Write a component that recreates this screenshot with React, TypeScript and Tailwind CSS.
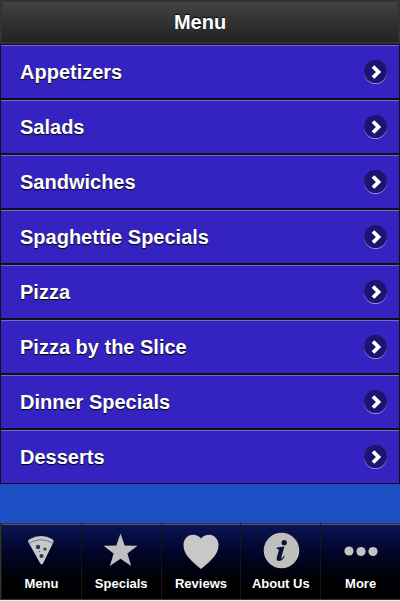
import React from "react";

const items = [
  "Appetizers",
  "Salads",
  "Sandwiches",
  "Spaghettie Specials",
  "Pizza",
  "Pizza by the Slice",
  "Dinner Specials",
  "Desserts",
];

function Chevron() {
  return (
    <span className="h-[23px] w-[23px] shrink-0 rounded-full bg-[#1c1470] shadow-[0_1px_0_#8f87dc]">
      <svg width="23" height="23" viewBox="0 0 23 23" aria-hidden="true">
        <path d="M9 6.5 L14.500 12 L9 17.500" fill="none" stroke="#fff" strokeWidth="3.800" />
      </svg>
    </span>
  );
}

function PizzaIcon() {
  return (
    <svg width="40" height="40" viewBox="0 0 40 40" aria-hidden="true">
      <path d="M7 11.500 Q7 10 8.500 9.200 Q20 3 31.500 9.200 Q33 10.200 32.500 12 L22 33.500 Q20.500 35.500 19 33 Z" fill="#c8c8c8" />
      <path d="M8.500 13 Q20 6.500 31.500 13" fill="none" stroke="#70748f" strokeWidth="1" />
      <circle cx="17" cy="17" r="2.200" fill="#30355f" />
      <circle cx="24" cy="19" r="1.600" fill="#30355f" />
      <circle cx="20.500" cy="26" r="2" fill="#30355f" />
      <circle cx="18.500" cy="21.500" r="0.800" fill="#565a7c" />
    </svg>
  );
}

function StarIcon() {
  return (
    <svg width="40" height="40" viewBox="0 0 40 40" aria-hidden="true">
      <path d="M19.500 3.500 L23.700 15.500 L36.500 15.700 L26.400 23.500 L30.200 36 L19.500 28.700 L8.900 36 L12.600 23.500 L2.500 15.700 L15.300 15.500 Z" fill="#bfbfbf" />
    </svg>
  );
}

function HeartIcon() {
  return (
    <svg width="40" height="40" viewBox="0 0 40 40" aria-hidden="true">
      <path d="M20 8.500 C22 5.800 25 4.700 28 4.700 C33.500 4.700 37.500 9 37.500 15 C37.500 24 31 30 20 39 C9 30 2.500 24 2.500 15 C2.500 9 6.500 4.700 12 4.700 C15 4.700 18 5.800 20 8.500 Z" fill="#c8c8c8" />
    </svg>
  );
}

function InfoIcon() {
  return (
    <svg width="40" height="40" viewBox="0 0 40 40" aria-hidden="true">
      <circle cx="20.500" cy="20.500" r="17.800" fill="#bfbfbf" />
      <circle cx="23.200" cy="12.700" r="2.600" fill="#0b1136" />
      <path d="M15.800 17.600 L23.400 16.500 L20.300 27.400 Q20 28.900 20.900 28.200 Q21.900 27.300 22.800 25.700 L23.700 26.400 Q20.900 31.100 17.500 30.900 Q15 30.400 15.800 27.400 L17.900 20 Q18.100 18.800 15.800 18.900 Z" fill="#0b1136" />
    </svg>
  );
}

function MoreIcon() {
  return (
    <svg width="40" height="40" viewBox="0 0 40 40" aria-hidden="true">
      <circle cx="8" cy="21" r="4.600" fill="#c4c4c4" />
      <circle cx="20" cy="21.500" r="4.600" fill="#c4c4c4" />
      <circle cx="32" cy="21.500" r="4.600" fill="#c4c4c4" />
    </svg>
  );
}

const tabs = [
  { label: "Menu", Icon: PizzaIcon },
  { label: "Specials", Icon: StarIcon },
  { label: "Reviews", Icon: HeartIcon },
  { label: "About Us", Icon: InfoIcon },
  { label: "More", Icon: MoreIcon },
];

export default function App() {
  return (
    <div className="flex min-h-screen flex-col bg-[#1c4fc4] font-['Liberation_Sans',Arial,sans-serif] font-bold text-white">
      <header className="flex h-11 items-center justify-center border-2 border-[#333] bg-linear-to-b from-[#434343] to-[#222]">
        <h1 className="text-xl leading-6 [text-shadow:0_-1px_1px_#000]">Menu</h1>
      </header>
      <main className="grow">
        <ul>
          {items.map((name) => (
            <li key={name}>
              <a
                href="#"
                className="flex h-[55px] items-center justify-between border border-[#111] bg-[#3422c1] pr-3 pl-[19px] text-xl leading-6 inset-shadow-[0_1px_0_#7067d3] [text-shadow:0_1px_1px_#000]"
              >
                <span>{name}</span>
                <Chevron />
              </a>
            </li>
          ))}
        </ul>
      </main>
      <footer className="border-b border-[#f3ecec]">
        <nav className="grid h-[77px] grid-cols-5 border-y border-l border-[#333] bg-linear-to-b from-[#0c1557] to-black">
          {tabs.map(({ label, Icon }) => (
            <a
              key={label}
              href="#"
              className="flex flex-col items-center border-l border-[#151515] pt-1.5 text-[13px] leading-4 inset-shadow-[0_1px_0_#4d5276] [text-shadow:0_1px_1px_#000]"
            >
              <Icon />
              <span className="mt-1.5">{label}</span>
            </a>
          ))}
        </nav>
      </footer>
    </div>
  );
}
